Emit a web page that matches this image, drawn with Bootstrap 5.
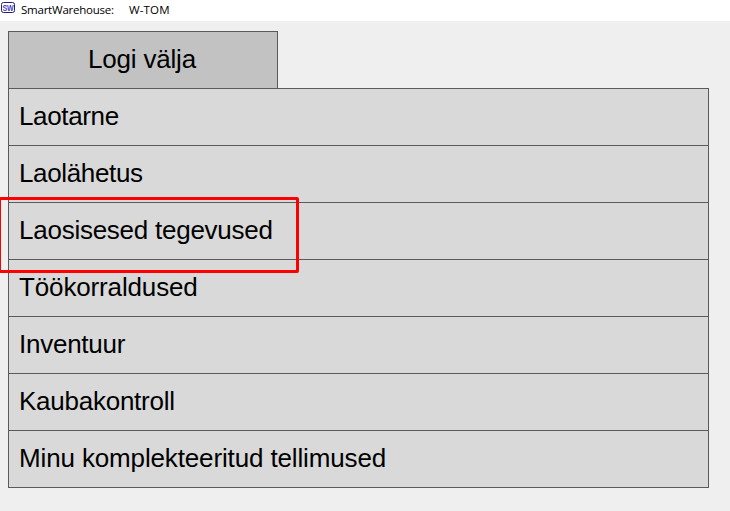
<!DOCTYPE html>
<html lang="et">
<head>
<meta charset="utf-8">
<meta name="viewport" content="width=device-width, initial-scale=1">
<title>SmartWarehouse: W-TOM</title>
<link href="https://cdn.jsdelivr.net/npm/bootstrap@5.3.0/dist/css/bootstrap.min.css" rel="stylesheet">
<style>
body { background: #efefef; color: #000; font-family: "Liberation Sans", Arial, sans-serif; height: 511px; overflow: hidden; }
.titlebar { height: 21px; font: 11.5px/19px "Open Sans", "Noto Sans", sans-serif; letter-spacing: -.23px; }
.titlebar svg { margin: 2px 5px 0 1px; }
.app-name { width: 108px; }
.site-name { letter-spacing: .15px; }
.screen { width: 701px; margin: 10px 0 0 8px; }
.logout { width: 270px; height: 58px; margin-bottom: -1px; padding: 0 2px 2px 0; letter-spacing: -.2px; --bs-btn-bg: #c2c2c2; --bs-btn-border-color: #5a5a5a; --bs-btn-color: #000; --bs-btn-font-size: 26px; --bs-btn-line-height: 1; }
.main-menu { --bs-list-group-bg: #d9d9d9; --bs-list-group-color: #000; --bs-list-group-border-color: #5a5a5a; font-size: 26px; line-height: 30px; letter-spacing: -.25px; }
.main-menu .list-group-item { height: 57px; padding: 12px 10px 0; }
.main-menu .list-group-item:first-child { height: 58px; }
.tight { letter-spacing: -.36px; }
.loose { letter-spacing: -.14px; }
.highlight-box { left: -10px; top: -6px; width: 300px; height: 76px; border: 3px solid #f00; border-left-width: 2px; border-radius: 2px; z-index: 3; pointer-events: none; }
</style>
</head>
<body>
<header class="titlebar bg-white d-flex align-items-start">
  <svg width="15" height="12" viewBox="0 0 15 12" aria-hidden="true">
    <rect x=".5" y=".5" width="13" height="10" rx="2" fill="#fff" stroke="#22226a"/>
    <text x="7" y="8.9" text-anchor="middle" textLength="11" lengthAdjust="spacingAndGlyphs" font-family="Liberation Sans, sans-serif" font-size="9.5" font-weight="bold" fill="#4a3cc8">SW</text>
  </svg>
  <span class="app-name">SmartWarehouse:</span>
  <span class="site-name">W-TOM</span>
</header>
<main class="screen">
  <button type="button" class="btn logout rounded-0 d-block">Logi välja</button>
  <div class="list-group rounded-0 main-menu">
    <a class="list-group-item tight">Laotarne</a>
    <a class="list-group-item tight">Laolähetus</a>
    <a class="list-group-item"><span>Laosisesed tegevused</span><span class="highlight-box position-absolute"></span></a>
    <a class="list-group-item loose">Töökorraldused</a>
    <a class="list-group-item">Inventuur</a>
    <a class="list-group-item">Kaubakontroll</a>
    <a class="list-group-item loose">Minu komplekteeritud tellimused</a>
  </div>
</main>
<script src="https://cdn.jsdelivr.net/npm/bootstrap@5.3.0/dist/js/bootstrap.bundle.min.js"></script>
</body>
</html>
